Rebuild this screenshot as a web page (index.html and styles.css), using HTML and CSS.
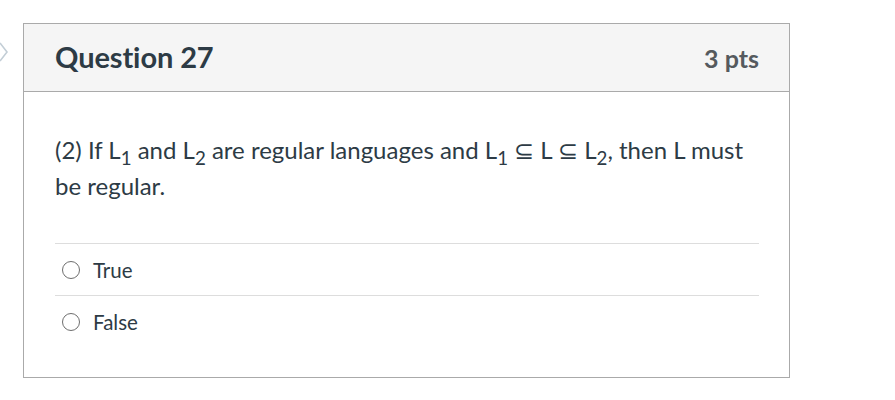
FILE: index.html
```html
<!DOCTYPE html>
<html>
<head>
<meta charset="utf-8">
<link rel="stylesheet" href="styles.css">
</head>
<body>
<div class="page">
  <div class="nav-chevron">
    <svg width="10" height="20" viewBox="0 0 10 20"><path d="M1 1 L8 10 L1 19" fill="none" stroke="#c3ced6" stroke-width="1.6"/></svg>
  </div>
  <div class="question">
    <div class="q-header">
      <h2 class="q-title">Question 27</h2>
      <div class="q-pts">3 pts</div>
    </div>
    <div class="q-body">
      <p class="q-text">(2) If L<sub>1</sub> and L<sub>2</sub> are regular languages and L<sub>1</sub> ⊆ L ⊆ L<sub>2</sub>, then L must be regular.</p>
      <div class="answers">
        <label class="answer"><span class="radio"></span><span class="answer-text">True</span></label>
        <label class="answer"><span class="radio"></span><span class="answer-text">False</span></label>
      </div>
    </div>
  </div>
</div>
</body>
</html>
```

FILE: styles.css
```css
html, body {
  margin: 0;
  padding: 0;
  background: #ffffff;
}
body {
  font-family: Lato, "Open Sans", sans-serif;
  color: #2d3b45;
}
.page {
  display: flex;
  align-items: flex-start;
  padding-top: 23px;
}
.nav-chevron {
  width: 23px;
  padding-top: 19px;
}
.nav-chevron svg {
  display: block;
  margin-left: -1px;
}
.question {
  width: 765px;
  border: 1px solid #aaaaaa;
  box-sizing: content-box;
}
.q-header {
  height: 67px;
  background: #f5f5f5;
  border-bottom: 1px solid #aaaaaa;
  display: flex;
  align-items: center;
  justify-content: space-between;
  padding: 0 30px 0 31px;
}
.q-title {
  margin: 0;
  font-size: 29px;
  font-weight: 700;
  color: #2d3b45;
  letter-spacing: -0.1px;
  position: relative;
  top: -1px;
}
.q-pts {
  font-size: 25px;
  font-weight: 700;
  color: #555a5e;
}
.q-body {
  padding: 40px 30px 0 31px;
  height: 245px;
}
.q-text {
  margin: 0;
  font-size: 24px;
  line-height: 36px;
}
.q-text sub {
  font-size: 0.78em;
  line-height: 0;
  vertical-align: -0.3em;
}
.answers {
  margin-top: 39px;
}
.answer {
  display: flex;
  align-items: center;
  height: 51px;
  border-top: 1px solid #dddddd;
}
.radio {
  width: 16px;
  height: 16px;
  border: 1.5px solid #6e6e6e;
  border-radius: 50%;
  margin-left: 7px;
  margin-right: 13px;
}
.answer-text {
  font-size: 20.5px;
  color: #2d3b45;
}
```
